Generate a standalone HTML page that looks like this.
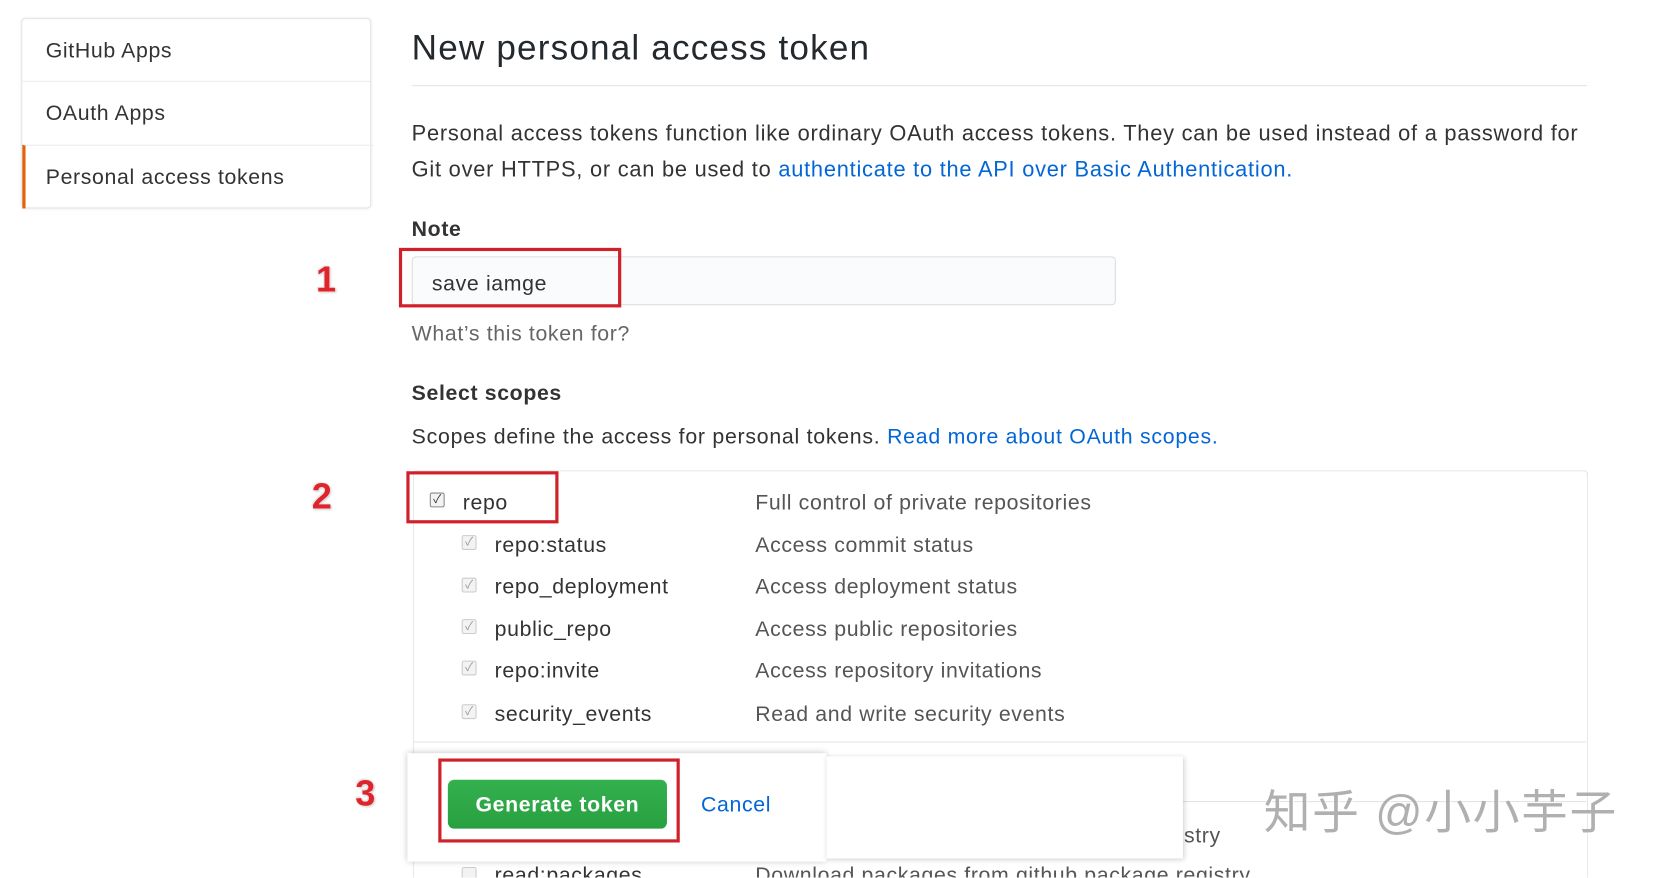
<!DOCTYPE html>
<html><head><meta charset="utf-8"><style>
html,body{margin:0;padding:0;width:1668px;height:878px;overflow:hidden;background:#fff}
#w{position:absolute;left:0;top:0;width:1568px;height:825px;overflow:hidden;transform:scale(1.06378);transform-origin:0 0;font-family:"Liberation Sans","Noto Sans CJK SC",sans-serif;color:#24292e;letter-spacing:0.6px}
.a{position:absolute;white-space:nowrap}
.side{position:absolute;left:20px;top:17px;width:327px;height:177px;border:1px solid #e1e4e8;border-radius:4px;box-shadow:0 0 3px rgba(0,0,0,.08)}
.si{position:absolute;left:0;width:327px;height:59px;border-top:1px solid #e8eaed;font-size:20px;line-height:61px;text-indent:22px;color:#333}
.blue{color:#0366d6}
.red{position:absolute;border:3px solid #d0202a}
.num{position:absolute;font-size:34px;font-weight:bold;color:#e0242c;letter-spacing:0;text-shadow:0 0 2px #fff,1px 1px 2px #bbb,-1px -1px 1px #ddd}
.cb{position:absolute;width:12px;height:12px;border:1px solid #ccc;background:#f3f3f3;border-radius:2px;font-size:11px;line-height:12px;text-align:center;color:#999;letter-spacing:0}
.row{font-size:20px;color:#333;line-height:23px}
.desc{font-size:20px;color:#555;line-height:23px}
</style></head><body><div id="w">
<div class="side">
<div class="si" style="top:0;border-top:none">GitHub Apps</div>
<div class="si" style="top:58px">OAuth Apps</div>
<div class="si" style="top:118px;border-left:3px solid #e36209;text-indent:19px;height:59px">Personal access tokens</div>
</div>
<div class="a" style="left:387px;top:26px;font-size:33px;color:#24292e;letter-spacing:1.1px">New personal access token</div>
<div class="a" style="left:387px;top:80px;width:1105px;height:1px;background:#e1e4e8"></div>
<div class="a" style="left:387px;top:114px;font-size:20.5px;color:#333;letter-spacing:0.72px">Personal access tokens function like ordinary OAuth access tokens. They can be used instead of a password for</div>
<div class="a" style="left:387px;top:148px;font-size:20.5px;color:#333;letter-spacing:0.72px">Git over HTTPS, or can be used to <span class="blue">authenticate to the API over Basic Authentication.</span></div>
<div class="a" style="left:387px;top:205px;font-size:20px;font-weight:bold;color:#333">Note</div>
<div class="a" style="left:387px;top:241px;width:660px;height:44px;border:1px solid #ddd;border-radius:4px;background:#fafbfc"></div>
<div class="a" style="left:406px;top:256px;font-size:20px;color:#333">save iamge</div>
<div class="red" style="left:375px;top:233px;width:203px;height:50px"></div>
<div class="num" style="left:297px;top:244px">1</div>
<div class="a" style="left:387px;top:303px;font-size:20px;color:#666">What’s this token for?</div>
<div class="a" style="left:387px;top:359px;font-size:20px;font-weight:bold;color:#333">Select scopes</div>
<div class="a" style="left:387px;top:400px;font-size:20px;color:#333;letter-spacing:0.7px">Scopes define the access for personal tokens. <span class="blue">Read more about OAuth scopes.</span></div>
<div class="a" style="left:388px;top:442px;width:1103px;height:383px;border:1px solid #e1e4e8;border-bottom:none;border-radius:4px 4px 0 0"></div>
<div class="a" style="left:389px;top:697px;width:1102px;height:1px;background:#e1e4e8"></div>
<div class="a" style="left:389px;top:753px;width:1102px;height:1px;background:#e1e4e8"></div>
<div class="cb" style="left:404px;top:463px;border-color:#888;color:#333">✓</div>
<div class="a row" style="left:435px;top:462px">repo</div>
<div class="a desc" style="left:710px;top:462px">Full control of private repositories</div>
<div class="red" style="left:382px;top:443px;width:137px;height:43px"></div>
<div class="num" style="left:293px;top:448px">2</div>
<div class="cb" style="left:434px;top:503px">✓</div><div class="a row" style="left:465px;top:502px">repo:status</div><div class="a desc" style="left:710px;top:502px">Access commit status</div>
<div class="cb" style="left:434px;top:543px">✓</div><div class="a row" style="left:465px;top:541px">repo_deployment</div><div class="a desc" style="left:710px;top:541px">Access deployment status</div>
<div class="cb" style="left:434px;top:582px">✓</div><div class="a row" style="left:465px;top:581px">public_repo</div><div class="a desc" style="left:710px;top:581px">Access public repositories</div>
<div class="cb" style="left:434px;top:621px">✓</div><div class="a row" style="left:465px;top:620px">repo:invite</div><div class="a desc" style="left:710px;top:620px">Access repository invitations</div>
<div class="cb" style="left:434px;top:662px">✓</div><div class="a row" style="left:465px;top:661px">security_events</div><div class="a desc" style="left:710px;top:661px">Read and write security events</div>
<div class="a desc" style="left:1113px;top:775px">stry</div>
<div class="a" style="left:430px;top:810px;width:1000px;height:15px;overflow:hidden">
<div class="cb" style="left:4px;top:5px"></div><div class="a row" style="left:35px;top:2px">read:packages</div><div class="a desc" style="left:280px;top:2px">Download packages from github package registry</div>
</div>
<div class="a" style="left:383px;top:708px;width:394px;height:102px;background:#fff;box-shadow:0 0 6px rgba(0,0,0,.25)"></div>
<div class="a" style="left:777px;top:711px;width:335px;height:96px;background:#fff;box-shadow:1px 1px 5px rgba(0,0,0,.2)"></div>
<div class="a" style="left:421px;top:733px;width:206px;height:46px;border-radius:6px;background:linear-gradient(#34b04f,#28a040);color:#fff;font-size:20px;font-weight:bold;line-height:48px;text-align:center">Generate token</div>
<div class="red" style="left:412px;top:713px;width:221px;height:73px"></div>
<div class="a" style="left:659px;top:746px;font-size:20px;color:#0366d6">Cancel</div>
<div class="num" style="left:334px;top:727px">3</div>
<div class="a" style="left:1188px;top:740px;font-size:44px;line-height:50px;letter-spacing:1.5px;color:rgba(150,150,150,.75);text-shadow:1px 1px 1px rgba(255,255,255,.8)">知乎 @小小芋子</div>
</div></body></html>
